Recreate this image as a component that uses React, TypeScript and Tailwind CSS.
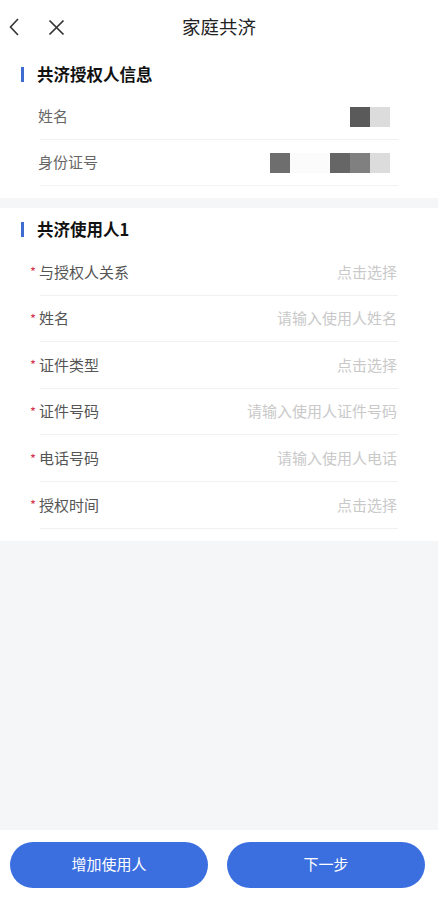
const font = { fontFamily: '"Noto Sans CJK SC", "Noto Sans", sans-serif' };

function Row({ label, required, placeholder, children }: { label: string; required?: boolean; placeholder?: string; children?: React.ReactNode }) {
  return (
    <div className="flex items-center justify-between border-b border-[#f1f1f1] h-[46.6px]">
      <div className="flex items-center text-[15px] text-[#555]">
        {required && <span className="-ml-[10px] w-[9px] text-[#d4354f] text-[13px] leading-none">*</span>}
        <span>{label}</span>
      </div>
      {placeholder ? <span className="text-[15px] text-[#c9c9c9] mr-[1px]">{placeholder}</span> : children}
    </div>
  );
}

function SectionTitle({ text }: { text: string }) {
  return (
    <div className="flex items-center gap-[13px] pl-[21px]">
      <div className="w-[3px] h-[15px] bg-[#3f6cd0]" />
      <span className="text-[16.5px] font-bold text-[#111]">{text}</span>
    </div>
  );
}

export default function App() {
  const users = [
    { label: "与授权人关系", placeholder: "点击选择" },
    { label: "姓名", placeholder: "请输入使用人姓名" },
    { label: "证件类型", placeholder: "点击选择" },
    { label: "证件号码", placeholder: "请输入使用人证件号码" },
    { label: "电话号码", placeholder: "请输入使用人电话" },
    { label: "授权时间", placeholder: "点击选择" },
  ];

  return (
    <div className="w-[438px] h-[899px] flex flex-col bg-[#f5f6f8]" style={font}>
      {/* header */}
      <div className="bg-white h-[54px] relative flex items-center">
        <svg className="ml-[8px]" width="13" height="20" viewBox="0 0 13 20" fill="none">
          <path d="M10 2 L2.5 10 L10 18" stroke="#333" strokeWidth="1.6" />
        </svg>
        <svg className="ml-[27px]" width="17" height="17" viewBox="0 0 17 17" fill="none">
          <path d="M1.5 1.5 L15.5 15.5 M15.5 1.5 L1.5 15.5" stroke="#333" strokeWidth="1.7" />
        </svg>
        <div className="absolute left-0 right-0 top-[13px] text-center text-[18.5px] text-[#222] pointer-events-none">家庭共济</div>
      </div>

      {/* 授权人信息 */}
      <div className="bg-white pb-[12px]">
        <div className="h-[40px] flex items-center">
          <SectionTitle text="共济授权人信息" />
        </div>
        <div className="px-[40px]">
          <div className="flex items-center justify-between border-b border-[#f1f1f1] h-[46px]">
            <span className="text-[15px] text-[#666] -ml-[2px]">姓名</span>
            <div className="flex mr-[8px]">
              <div className="w-[20px] h-[20px] bg-[#5a5a5a]" />
              <div className="w-[20px] h-[20px] bg-[#dcdcdc]" />
            </div>
          </div>
          <div className="flex items-center justify-between border-b border-[#f3f3f3] h-[46px]">
            <span className="text-[15px] text-[#666] -ml-[2px]">身份证号</span>
            <div className="flex mr-[8px]">
              <div className="w-[20px] h-[20px] bg-[#6e6e6e]" />
              <div className="w-[40px] h-[20px] bg-[#fbfbfb]" />
              <div className="w-[20px] h-[20px] bg-[#666666]" />
              <div className="w-[20px] h-[20px] bg-[#808080]" />
              <div className="w-[20px] h-[20px] bg-[#dcdcdc]" />
            </div>
          </div>
        </div>
      </div>

      <div className="h-[10px]" />

      {/* 使用人 */}
      <div className="bg-white pb-[12px]">
        <div className="h-[41px] flex items-center pt-[2px]">
          <SectionTitle text="共济使用人1" />
        </div>
        <div className="px-[40px]">
          {users.map((u) => (
            <Row key={u.label} label={u.label} required placeholder={u.placeholder} />
          ))}
        </div>
      </div>

      <div className="flex-1" />

      {/* bottom */}
      <div className="bg-white h-[69px] flex items-center pl-[10px] pr-[13px] gap-[19px]">
        <button className="flex-1 h-[46px] rounded-full bg-[#3b6fe0] text-white text-[15px]">增加使用人</button>
        <button className="flex-1 h-[46px] rounded-full bg-[#3b6fe0] text-white text-[15px]">下一步</button>
      </div>
    </div>
  );
}
